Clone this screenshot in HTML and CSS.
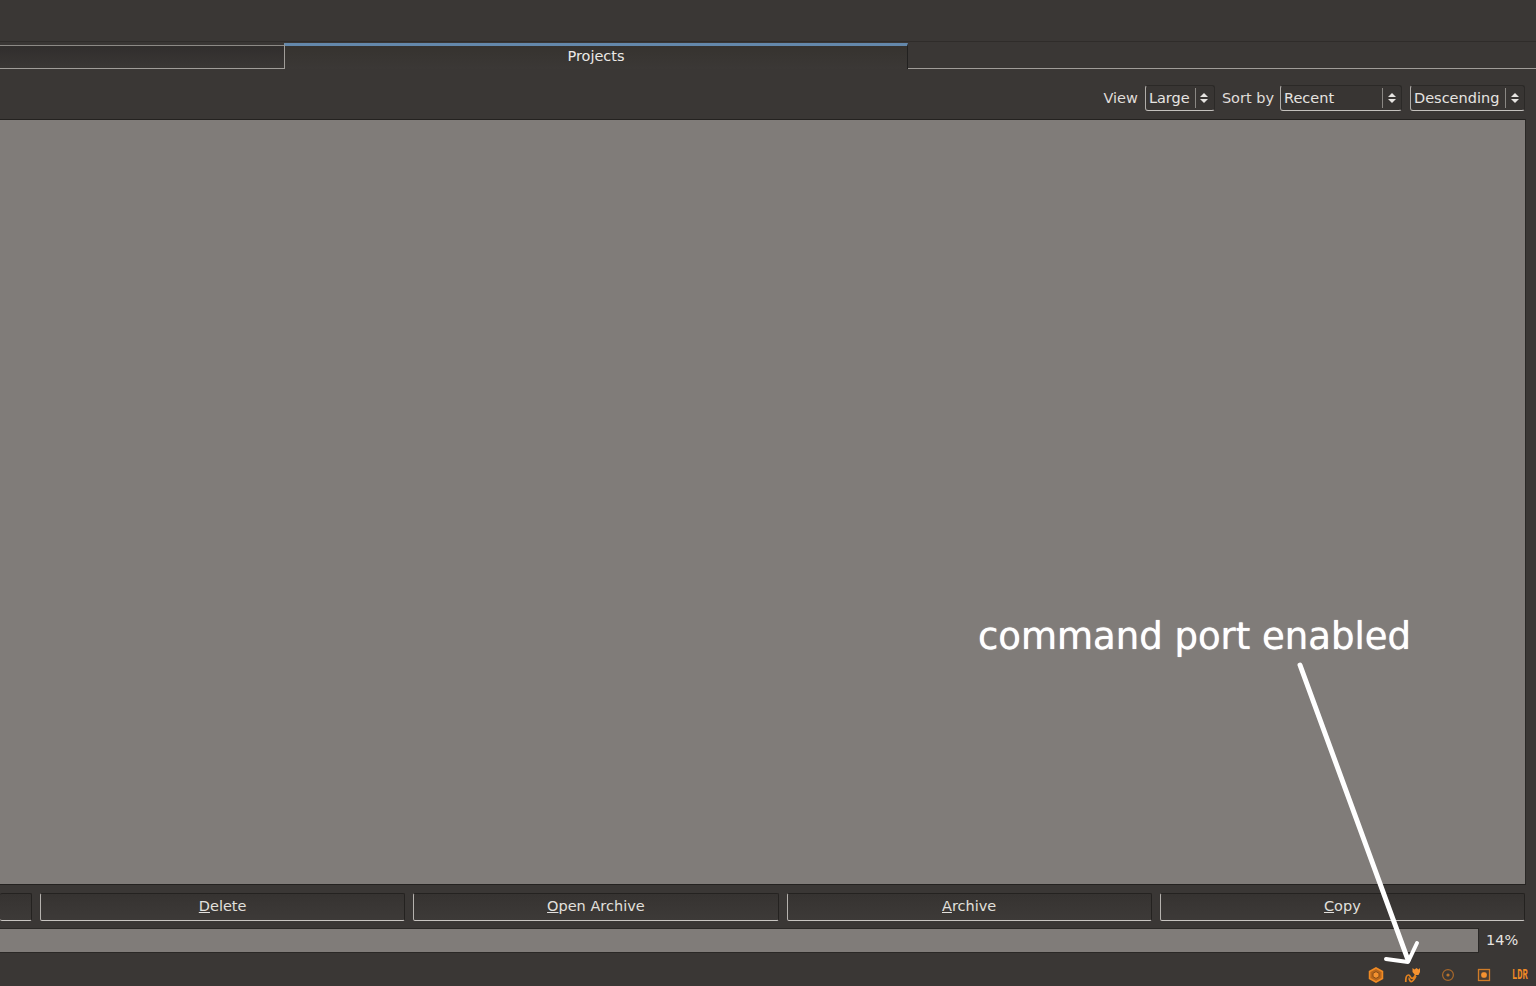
FILE: index.html
```html
<!DOCTYPE html>
<html lang="en">
<head>
<meta charset="utf-8">
<title>Projects</title>
<link rel="stylesheet" href="styles.css">
</head>
<body>
<div class="app">
  <div class="topbar"></div>
  <div class="tabs">
    <div class="tab tab-left"></div>
    <div class="tab tab-active">Projects</div>
    <div class="tab-rest"></div>
  </div>
  <div class="toolbar">
    <span class="label">View</span>
    <div class="select sel-view"><span class="sel-text">Large</span><span class="spin"><i class="up"></i><i class="down"></i></span></div>
    <span class="label label-tight">Sort by</span>
    <div class="select sel-sort"><span class="sel-text">Recent</span><span class="spin"><i class="up"></i><i class="down"></i></span></div>
    <div class="select sel-order"><span class="sel-text">Descending</span><span class="spin"><i class="up"></i><i class="down"></i></span></div>
  </div>
  <div class="panel"></div>
  <div class="buttons">
    <div class="btn btn-cut"></div>
    <div class="btn"><span><u>D</u>elete</span></div>
    <div class="btn"><span><u>O</u>pen Archive</span></div>
    <div class="btn"><span><u>A</u>rchive</span></div>
    <div class="btn"><span><u>C</u>opy</span></div>
  </div>
  <div class="progress-row">
    <div class="progress"></div>
    <div class="percent">14%</div>
  </div>
  <div class="status">
    <svg class="ico" viewBox="0 0 16 16"><path d="M8 1 14.4 4.5V11.5L8 15 1.6 11.5V4.5Z" fill="#b8661c" stroke="#f08a24" stroke-width="1.7"/><path d="M8 4.6 11 6.3V9.7L8 11.4 5 9.7V6.3Z" fill="#f59230" stroke="#7d4716" stroke-width=".9"/></svg>
    <svg class="ico" viewBox="0 0 16 16"><path d="M8.5 1 10.5 2.5 12.5 1 14.5 2.5 16 1V5L14.5 8H11L8.5 5Z" fill="#f59230"/><path d="M11.5 8C10.5 10 9.6 11.4 8 11.4 6.2 11.4 6.6 8 4.4 8 2.4 8 1.5 11 1.8 15M4.5 11.2C5.6 11.2 5.2 14.6 7.2 14.6 9.2 14.6 10.6 12 12 9" fill="none" stroke="#e5831f" stroke-width="1.7"/></svg>
    <svg class="ico" viewBox="0 0 16 16"><circle cx="8" cy="8" r="5.4" fill="none" stroke="#a9682a" stroke-width="1.2"/><circle cx="8" cy="8" r="1.6" fill="#b9742c"/></svg>
    <svg class="ico" viewBox="0 0 16 16"><rect x="2.5" y="2.5" width="11" height="11" fill="#4b3e32" stroke="#d07c28" stroke-width="1.3"/><rect x="5.2" y="5.2" width="5.6" height="5.6" rx="2" fill="#f59230"/></svg>
    <span class="ldr">LDR</span>
  </div>
  <div class="note">command port enabled</div>
  <svg class="arrow" viewBox="0 0 1536 986" width="1536" height="986">
    <path d="M1300 665 1408 960" fill="none" stroke="#fff" stroke-width="5" stroke-linecap="round"/>
    <path d="M1386 959 1408 962 1417 943" fill="none" stroke="#fff" stroke-width="4" stroke-linecap="round" stroke-linejoin="round"/>
  </svg>
</div>
</body>
</html>
```
FILE: styles.css
```css
* { box-sizing: border-box; }
html, body { margin: 0; padding: 0; }
body { background: #3a3735; }
.app {
  position: relative;
  width: 1536px;
  height: 986px;
  overflow: hidden;
  display: flex;
  flex-direction: column;
  background: #3a3735;
  color: #e6e4e1;
  font-family: "DejaVu Sans", sans-serif;
  font-size: 14.5px;
}
.topbar { height: 42px; background: #3a3735; border-bottom: 1px solid #2f2c2a; flex: none; }
.tabs { height: 27px; display: flex; flex: none; }
.tab-left {
  width: 284px;
  margin-top: 3px;
  height: 24px;
  border-top: 1px solid #8d8a86;
  border-bottom: 1px solid #a09d99;
  background: linear-gradient(#312e2d, #3a3735);
}
.tab-active {
  width: 624px;
  height: 26px;
  margin-top: 1px;
  border-top: 3px solid #6488ab;
  border-left: 1px solid #a09d99;
  border-right: 1px solid #222120;
  background: linear-gradient(#36332f, #3b3836);
  text-align: center;
  line-height: 21px;
  color: #ebe9e6;
}
.tab-rest { flex: 1; border-bottom: 1px solid #a09d99; }
.toolbar {
  height: 50px;
  flex: none;
  display: flex;
  align-items: flex-start;
  justify-content: flex-end;
  padding: 16px 11px 0 0;
}
.label { line-height: 26px; margin-right: 7px; color: #e0deda; }
.label-tight { margin-right: 6px; }
.select {
  height: 26px;
  display: flex;
  align-items: center;
  border-left: 1px solid #b0ada9;
  border-bottom: 1px solid #c4c1bd;
  border-top: 1px solid #2b2927;
  border-right: 1px solid #2b2927;
  border-radius: 3px;
  background: #383533;
  padding-left: 3px;
  margin-right: 7px;
}
.sel-view { width: 70px; }
.sel-sort { width: 122px; margin-right: 8px; }
.sel-order { width: 115px; margin-right: 0; }
.sel-text { flex: 1; line-height: 22px; color: #e6e4e1; white-space: nowrap; }
.spin {
  width: 18px;
  height: 20px;
  margin-right: 1px;
  border-left: 1px solid #8a8783;
  display: flex;
  flex-direction: column;
  align-items: center;
  justify-content: center;
  gap: 2px;
  flex: none;
}
.spin i { display: block; width: 0; height: 0; border-left: 4px solid transparent; border-right: 4px solid transparent; }
.spin .up { border-bottom: 4px solid #e6e4e1; }
.spin .down { border-top: 4px solid #e6e4e1; }
.panel {
  height: 766px;
  flex: none;
  margin-right: 10px;
  background: #807c79;
  border-top: 1px solid #242220;
  border-right: 1px solid #2a2826;
  border-bottom: 1px solid #242220;
}
.buttons {
  height: 42px;
  flex: none;
  display: flex;
  gap: 8px;
  padding: 8px 11px 6px 0;
}
.btn {
  flex: 1;
  height: 28px;
  border-left: 1px solid #b5b2ae;
  border-bottom: 1px solid #c8c5c1;
  border-top: 1px solid #242220;
  border-right: 1px solid #242220;
  border-radius: 2px;
  background: linear-gradient(#363331, #3d3a38);
  text-align: center;
  line-height: 24px;
  color: #e2e0dd;
}
.btn-cut { flex: none; width: 32px; border-left: 0; }
.progress-row { height: 26px; flex: none; display: flex; align-items: flex-start; }
.progress {
  width: 1479px;
  height: 25px;
  margin-top: 1px;
  background: #807c79;
  border-top: 1px solid #2a2826;
  border-right: 1px solid #2a2826;
  border-bottom: 1px solid #2a2826;
}
.percent { flex: 1; line-height: 26px; color: #e6e4e1; padding-left: 7px; }
.status {
  flex: 1;
  display: flex;
  justify-content: flex-end;
  align-items: center;
  gap: 20px;
  padding: 11px 8px 0 0;
}
.ico { width: 16px; height: 16px; flex: none; }
.ldr {
  color: #f08a24;
  font-family: "Liberation Mono", monospace;
  font-weight: 700;
  font-size: 14px;
  width: 16px;
  line-height: 16px;
  white-space: nowrap;
  transform: scaleX(.62);
  transform-origin: left center;
}
.note {
  position: absolute;
  left: 978px;
  top: 616px;
  color: #fff;
  font-size: 37px;
  line-height: 42px;
  white-space: nowrap;
  text-shadow: 0 0 1px #fff;
}
.arrow { position: absolute; left: 0; top: 0; pointer-events: none; }
```
